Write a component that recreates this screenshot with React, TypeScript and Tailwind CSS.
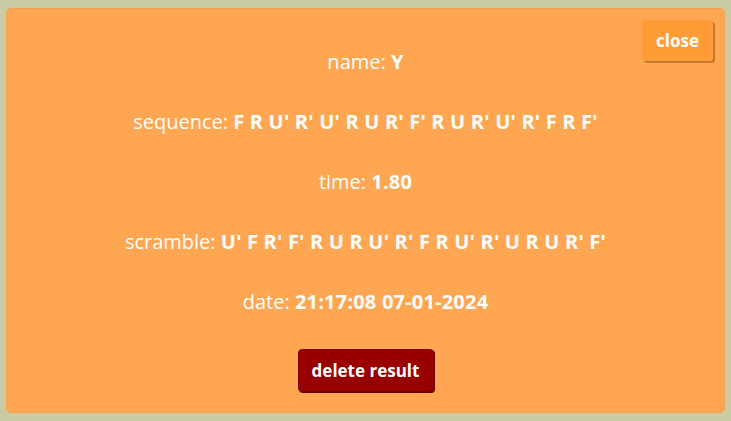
export default function App() {
  const rows: [string, string][] = [
    ["name", "Y"],
    ["sequence", "F R U' R' U' R U R' F' R U R' U' R' F R F'"],
    ["time", "1.80"],
    ["scramble", "U' F R' F' R U R U' R' F R U' R' U R U R' F'"],
    ["date", "21:17:08 07-01-2024"],
  ];

  return (
    <div className="h-[421px] w-[731px] bg-[#c9cca2] pt-[8px] pl-[6px] font-['Open_Sans',sans-serif]">
      <div className="relative flex h-[405px] w-[719px] flex-col items-center rounded-[5px] border border-[#f7a04a] bg-[#ffa652] text-white">
        {/* Close */}
        <button className="absolute right-[11px] top-[11px] h-[41px] w-[71px] rounded-[3px] bg-[#ff9c35] text-[17px] font-bold shadow-[2px_2px_0_#c37a35]">
          close
        </button>

        {/* Result details */}
        <div className="mt-[39px] flex flex-col items-center gap-[32px] text-[20px] leading-[28px]">
          {rows.map(([label, value]) => (
            <p key={label}>
              {label}: <span className="font-bold tracking-[0.2px]">{value}</span>
            </p>
          ))}
        </div>

        <button className="mt-[33px] h-[43px] w-[136px] rounded-[4px] border border-[#7a0000] bg-[#990000] text-[17px] font-bold shadow-[1px_1px_0_#6a0000]">
          delete result
        </button>
      </div>
    </div>
  );
}
